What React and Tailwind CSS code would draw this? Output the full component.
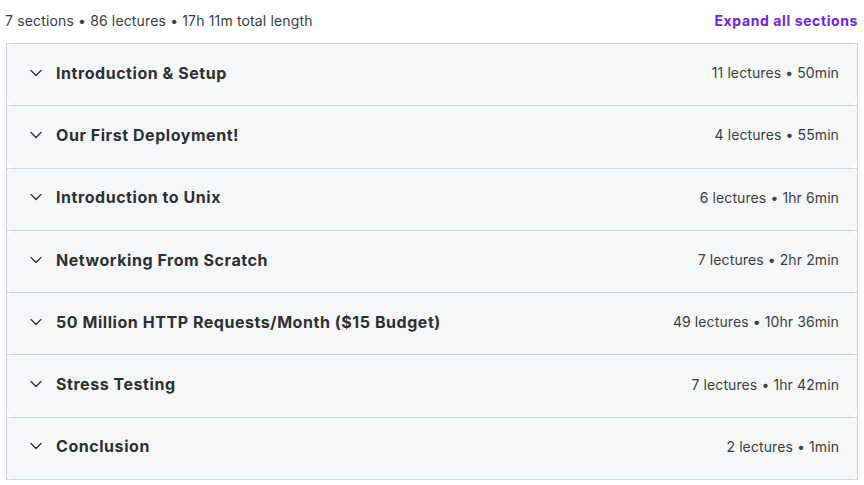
import { ChevronDown } from "lucide-react";

const SECTIONS = [
  { title: "Introduction & Setup", meta: "11 lectures • 50min" },
  { title: "Our First Deployment!", meta: "4 lectures • 55min" },
  { title: "Introduction to Unix", meta: "6 lectures • 1hr 6min" },
  { title: "Networking From Scratch", meta: "7 lectures • 2hr 2min" },
  {
    title: "50 Million HTTP Requests/Month ($15 Budget)",
    meta: "49 lectures • 10hr 36min",
  },
  { title: "Stress Testing", meta: "7 lectures • 1hr 42min" },
  { title: "Conclusion", meta: "2 lectures • 1min" },
];

export default function App() {
  return (
    <div className="w-[864px] h-[485px] bg-white font-['Inter',sans-serif] text-[#2d2f31]">
      <div className="flex items-center justify-between h-[43px] pl-[5px] pr-[6px] pb-[2px]">
        <span className="text-[14px] tracking-[0.15px] text-[#3b3d42]">
          7 sections • 86 lectures • 17h 11m total length
        </span>
        <button className="text-[14px] font-bold text-[#6d28d2] tracking-[0.6px]">
          Expand all sections
        </button>
      </div>

      {/* Lista de secciones */}
      <div className="mx-[6px] border border-[#d1d2e0]">
        {SECTIONS.map((s, i) => {
          const last = i === SECTIONS.length - 1;
          return (
            <div
              key={s.title}
              className={last ? "h-[61.3px]" : "h-[62.3px] border-b border-[#d1d2e0]"}
            >
              <div className="flex h-full items-center justify-between rounded-lg bg-[#f6f7f9] pl-[19px] pr-[18px] pb-[4px]">
                <div className="flex items-center gap-[10px]">
                  <ChevronDown className="h-[20px] w-[20px] text-[#303141]" strokeWidth={1.6} />
                  <span className="text-[16px] font-bold tracking-[0.55px]">{s.title}</span>
                </div>
                <span className="text-[14px] tracking-[0.1px] text-[#3b3d42]">{s.meta}</span>
              </div>
            </div>
          );
        })}
      </div>
    </div>
  );
}
